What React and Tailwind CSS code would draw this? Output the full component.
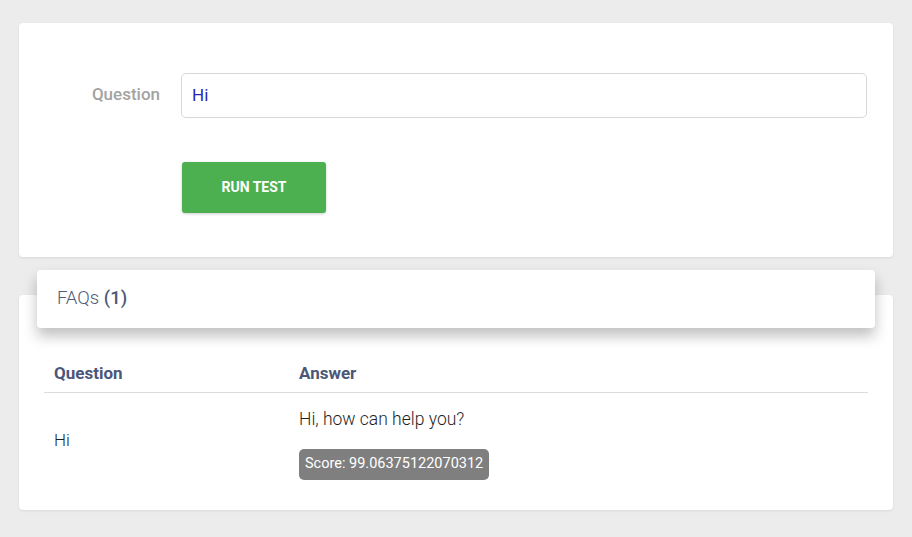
export default function App() {
  return (
    <div className="min-h-[537px] bg-[#ececec] px-[19px] pt-[23px] pb-[27px] font-['Roboto',sans-serif]">
      {/* test form */}
      <div className="bg-white rounded-[4px] shadow-[0_1px_3px_rgba(0,0,0,0.08)] pt-[50px] pb-[44px] pr-[26px]">
        <div className="flex items-center">
          <label className="w-[141px] text-right text-[17px] font-medium text-[#a3a3a3] -mt-[2px]">Question</label>
          <div className="flex-1 ml-[21px] h-[45px] border border-[#d7d7d7] rounded-[5px] flex items-center px-[10px]">
            <span className="text-[17px] text-[#2727b4]">Hi</span>
          </div>
        </div>
        <div className="mt-[44px] ml-[163px]">
          <button className="w-[144px] h-[51px] bg-[#4caf50] rounded-[3px] text-white text-[14px] font-bold shadow-[0_1px_3px_rgba(0,0,0,0.2)]">
            RUN TEST
          </button>
        </div>
      </div>

      {/* results */}
      <div className="mt-[13px]">
        <div className="relative z-10 mx-[18px] h-[58px] bg-white rounded-[4px] shadow-[0_8px_14px_rgba(0,0,0,0.25)] flex items-center px-[20px]">
          <span className="text-[18.5px] font-light text-[#4d5a78]">
            FAQs <span className="font-medium">(1)</span>
          </span>
        </div>
        <div className="-mt-[33px] bg-white rounded-[4px] shadow-[0_1px_3px_rgba(0,0,0,0.08)] pt-[61px] pb-[21px] px-[25px]">
          <table className="w-full border-collapse">
            <thead>
              <tr className="border-b border-[#dcdcdc]">
                <th className="w-[245px] h-[36px] px-[10px] text-left text-[17px] font-bold text-[#4b5779]">Question</th>
                <th className="h-[36px] px-[10px] text-left text-[17px] font-bold text-[#4b5779]">Answer</th>
              </tr>
            </thead>
            <tbody>
              <tr>
                <td className="px-[10px] align-middle text-[17px] font-light text-[#1e1e1e]">Hi</td>
                <td className="px-[10px] pt-[14px] pb-[9px]">
                  <div className="text-[17.5px] leading-[24px] font-light text-[#1e1e1e]">Hi, how can help you?</div>
                  <span className="inline-flex items-center mt-[18px] h-[31px] px-[6px] rounded-[5px] bg-[#7f7f7f] text-white text-[14.5px]">
                    Score: 99.06375122070312
                  </span>
                </td>
              </tr>
            </tbody>
          </table>
        </div>
      </div>
    </div>
  );
}
